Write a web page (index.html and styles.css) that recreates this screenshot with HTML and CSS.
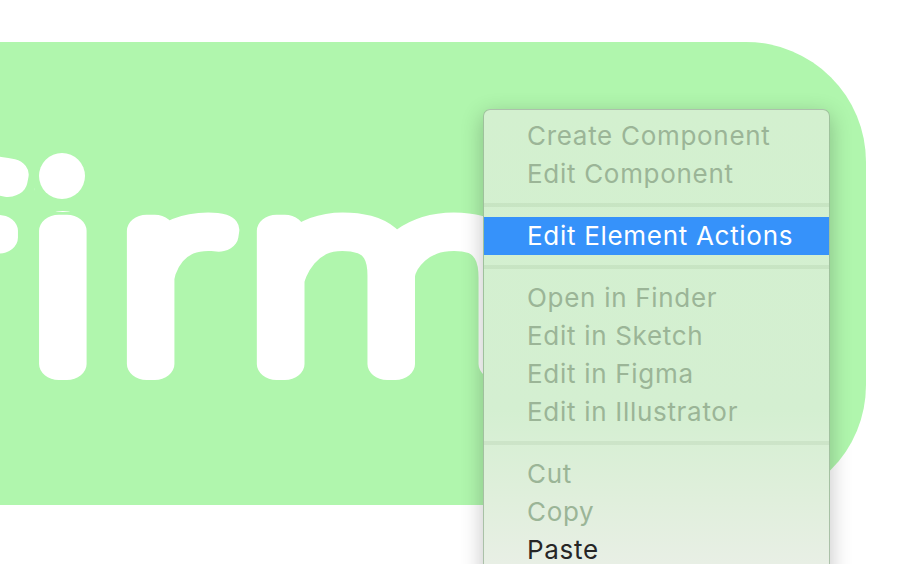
FILE: index.html
```html
<!DOCTYPE html>
<html lang="en">
<head>
<meta charset="utf-8">
<title>Context menu</title>
<link rel="stylesheet" href="styles.css">
</head>
<body>
<div class="stage">
  <div class="button">
    <svg class="label" viewBox="-300 42 1166 463" preserveAspectRatio="none">
      <defs>
        <clipPath id="no-dot" clipPathUnits="userSpaceOnUse">
          <path clip-rule="evenodd" d="M-300 42 H866 V505 H-300 Z M35 138 H110 V211 H35 Z"/>
        </clipPath>
      </defs>
      <g clip-path="url(#no-dot)">
        <g transform="scale(1.23 1)">
          <text class="label-text wide" x="-560" y="364">Con<tspan x="-74.5">f</tspan><tspan x="25">i</tspan><tspan x="98">r</tspan><tspan x="205">m</tspan></text>
          <text class="label-text core" x="-560" y="364" aria-hidden="true">Con<tspan x="-74.5">f</tspan><tspan x="25">i</tspan><tspan x="98">r</tspan><tspan x="205">m</tspan></text>
        </g>
      </g>
      <circle class="dot" cx="62" cy="176" r="23"/>
    </svg>
  </div>

  <div class="menu">
    <div class="item disabled">Create Component</div>
    <div class="item disabled">Edit Component</div>
    <div class="sep"></div>
    <div class="item active">Edit Element Actions</div>
    <div class="sep"></div>
    <div class="item disabled">Open in Finder</div>
    <div class="item disabled">Edit in Sketch</div>
    <div class="item disabled">Edit in Figma</div>
    <div class="item disabled">Edit in Illustrator</div>
    <div class="sep"></div>
    <div class="item disabled">Cut</div>
    <div class="item disabled">Copy</div>
    <div class="item">Paste</div>
  </div>
</div>
</body>
</html>
```

FILE: styles.css
```css
html, body {
  margin: 0;
  padding: 0;
  background: #ffffff;
}
body {
  width: 902px;
  height: 564px;
  overflow: hidden;
}
.stage {
  position: relative;
  padding-top: 42px;
  height: 522px;
}
.button {
  margin-left: -300px;
  width: 1166px;
  height: 463px;
  border-radius: 120px;
  background: #b0f6ad;
  overflow: hidden;
}
.label {
  display: block;
  width: 100%;
  height: 100%;
}
.label-text {
  font-family: Roboto, "Liberation Sans", sans-serif;
  font-weight: 100;
  font-size: 252px;
  fill: #ffffff;
  stroke: #ffffff;
  stroke-linejoin: round;
  stroke-linecap: round;
  vector-effect: non-scaling-stroke;
}
.label-text.wide {
  stroke-width: 32px;
}
.label-text.core {
  stroke-width: 14px;
}
.dot {
  fill: #ffffff;
}
.menu {
  position: absolute;
  left: 483px;
  top: 109px;
  width: 345px;
  padding: 7px 0 20px;
  border: 1px solid rgba(60, 110, 60, 0.35);
  border-radius: 7px;
  background: linear-gradient(to bottom, #d3f0cf 0px, #d4efd1 300px, #e0efdc 390px, #e9efe6 460px);
  box-shadow: 0 6px 22px rgba(0, 0, 0, 0.24);
  font-family: Inter, "Liberation Sans", sans-serif;
  font-size: 26px;
  letter-spacing: 0.7px;
}
.item {
  height: 38px;
  line-height: 38px;
  padding-left: 43px;
  color: #262626;
  white-space: nowrap;
}
.item.disabled {
  color: #9bb597;
}
.item.active {
  background: #3692fa;
  color: #ffffff;
}
.sep {
  height: 24px;
  display: flex;
  align-items: center;
}
.sep::before {
  content: "";
  display: block;
  width: 100%;
  height: 4px;
  background: rgba(60, 100, 55, 0.08);
}
```
